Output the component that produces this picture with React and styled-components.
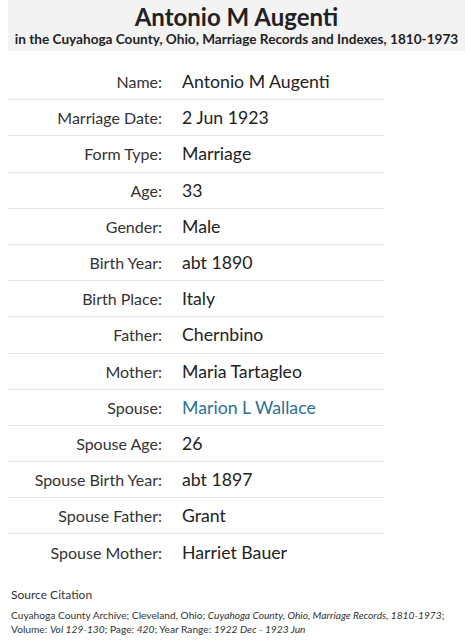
import React from "react";
import styled, { createGlobalStyle } from "styled-components";

const GlobalStyle = createGlobalStyle`
  body {
    margin: 0;
    background: #fff;
    font-family: Lato, "Open Sans", sans-serif;
    color: #333;
  }
`;

const Page = styled.div`
  padding: 0 0 0 8px;
`;

const Header = styled.div`
  background: #f3f3f3;
  text-align: center;
  padding: 3px 0 3px;
`;

const Title = styled.h1`
  margin: 0;
  font-size: 24px;
  line-height: 28px;
  font-weight: 700;
  color: #222;
`;

const Subtitle = styled.div`
  font-size: 13.6px;
  line-height: 17px;
  font-weight: 700;
  color: #222;
  white-space: nowrap;
`;

const Table = styled.div`
  width: 376px;
  margin-top: 13px;
`;

const Row = styled.div`
  display: grid;
  grid-template-columns: 154px 1fr;
  column-gap: 20px;
  align-items: center;
  height: 35.2px;
  border-bottom: ${({ last }) => (last ? "none" : "1px solid #e6e6e6")};
`;

const Label = styled.div`
  text-align: right;
  font-size: 16px;
  color: #333;
  white-space: nowrap;
`;

const Value = styled.div`
  font-size: 17.7px;
  color: ${({ link }) => (link ? "#2c6f94" : "#222")};
`;

const Source = styled.div`
  margin-top: 15px;
  padding-left: 3px;
`;

const SourceTitle = styled.div`
  font-size: 12px;
  line-height: 20px;
  margin-bottom: 3px;
  color: #333;
`;

const SourceText = styled.div`
  font-size: 10.2px;
  line-height: 14px;
  color: #333;
  white-space: nowrap;
`;

const rows = [
  ["Name", "Antonio M Augenti"],
  ["Marriage Date", "2 Jun 1923"],
  ["Form Type", "Marriage"],
  ["Age", "33"],
  ["Gender", "Male"],
  ["Birth Year", "abt 1890"],
  ["Birth Place", "Italy"],
  ["Father", "Chernbino"],
  ["Mother", "Maria Tartagleo"],
  ["Spouse", "Marion L Wallace", true],
  ["Spouse Age", "26"],
  ["Spouse Birth Year", "abt 1897"],
  ["Spouse Father", "Grant"],
  ["Spouse Mother", "Harriet Bauer"],
];

const App = () => {
  return (
    <Page>
      <GlobalStyle />
      <Header>
        <Title>Antonio M Augenti</Title>
        <Subtitle>
          in the Cuyahoga County, Ohio, Marriage Records and Indexes, 1810-1973
        </Subtitle>
      </Header>
      <Table>
        {rows.map(([label, value, link], i) => (
          <Row key={label} last={i === rows.length - 1}>
            <Label>{label}:</Label>
            <Value link={link}>{value}</Value>
          </Row>
        ))}
      </Table>
      <Source>
        <SourceTitle>Source Citation</SourceTitle>
        <SourceText>
          Cuyahoga County Archive; Cleveland, Ohio;{" "}
          <i>Cuyahoga County, Ohio, Marriage Records, 1810-1973</i>;
        </SourceText>
        <SourceText>
          Volume: <i>Vol 129-130</i>; Page: <i>420</i>; Year Range:{" "}
          <i>1922 Dec - 1923 Jun</i>
        </SourceText>
      </Source>
    </Page>
  );
};

export default App;
